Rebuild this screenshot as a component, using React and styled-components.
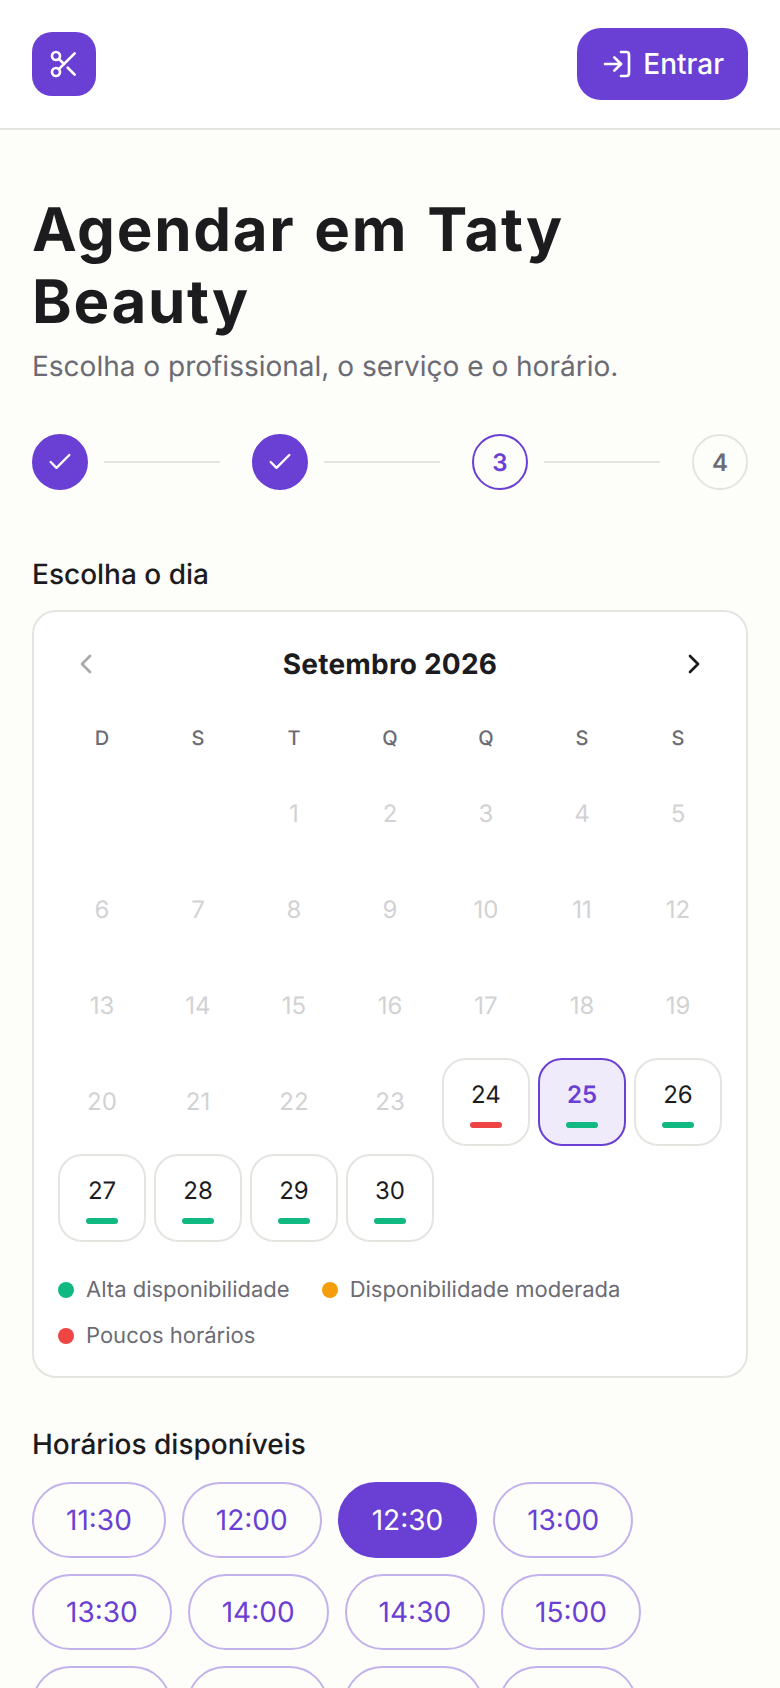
import React from 'react';
import styled, { createGlobalStyle } from 'styled-components';
import { Scissors, LogIn, Check, ChevronLeft, ChevronRight } from 'lucide-react';

const purple = '#6a3fd4';
const ink = '#1c1c1f';
const muted = '#6b6b73';
const line = '#e4e4e0';

const GlobalStyle = createGlobalStyle`
  html, body {
    margin: 0;
    padding: 0;
    background: #fdfdfa;
  }
  * {
    box-sizing: border-box;
  }
`;

const Page = styled.div`
  height: 100vh;
  overflow: hidden;
  font-family: Inter, "Liberation Sans", sans-serif;
  text-rendering: geometricPrecision;
  color: ${ink};
  background: #fdfdfa;
`;

const Header = styled.header`
  display: flex;
  justify-content: space-between;
  align-items: center;
  height: 130px;
  padding: 0 32px;
  background: #fff;
  border-bottom: 2px solid ${line};
`;

const Logo = styled.div`
  display: flex;
  justify-content: center;
  align-items: center;
  width: 64px;
  height: 64px;
  border-radius: 20px;
  background: ${purple};
  color: #fff;
`;

const LoginButton = styled.button`
  display: flex;
  align-items: center;
  gap: 10px;
  height: 72px;
  padding: 0 24px;
  border: 0;
  border-radius: 24px;
  background: ${purple};
  color: #fff;
  font-family: inherit;
  font-size: 28px;
  font-weight: 500;
`;

const Main = styled.main`
  padding: 64px 32px 0;
`;

const Title = styled.h1`
  margin: 0;
  font-size: 60px;
  font-weight: 700;
  line-height: 72px;
  letter-spacing: 1.7px;
  word-spacing: 3px;
`;

const Subtitle = styled.p`
  margin: 8px 0 0;
  font-size: 28px;
  line-height: 40px;
  color: ${muted};
`;

const Steps = styled.div`
  display: flex;
  align-items: center;
  margin-top: 48px;
`;

const StepDot = styled.div`
  display: flex;
  flex: none;
  justify-content: center;
  align-items: center;
  width: 56px;
  height: 56px;
  border-radius: 50%;
  border: 2px solid ${(p) => (p.$state === 'todo' ? line : purple)};
  background: ${(p) => (p.$state === 'done' ? purple : 'transparent')};
  color: ${(p) => (p.$state === 'todo' ? muted : p.$state === 'done' ? '#fff' : purple)};
  font-size: 24px;
  font-weight: 600;
`;

const StepLine = styled.div`
  flex: 1;
  height: 2px;
  margin: 0 32px 0 16px;
  background: ${line};
`;

const SectionLabel = styled.h2`
  margin: 0 0 16px;
  font-size: 28px;
  font-weight: 500;
  line-height: 40px;
`;

const DaySection = styled.section`
  margin-top: 64px;
`;

const Card = styled.div`
  padding: 24px;
  border: 2px solid ${line};
  border-radius: 24px;
  background: #fff;
`;

const MonthBar = styled.div`
  display: flex;
  justify-content: space-between;
  align-items: center;
  height: 56px;
  padding: 0 12px;
`;

const MonthName = styled.div`
  font-size: 28px;
  font-weight: 700;
  letter-spacing: 0.2px;
`;

const NavArrow = styled.span`
  display: flex;
  color: ${(p) => (p.$off ? '#a9a9ad' : ink)};
`;

const Grid = styled.div`
  display: grid;
  grid-template-columns: repeat(7, 88px);
  gap: 8px;
`;

const WeekRow = styled(Grid)`
  margin-top: 22px;
  margin-bottom: 8px;
`;

const WeekDay = styled.div`
  height: 48px;
  line-height: 48px;
  text-align: center;
  font-size: 20px;
  font-weight: 500;
  color: ${muted};
`;

const MutedDay = styled.div`
  height: 88px;
  line-height: 88px;
  text-align: center;
  font-size: 24px;
  color: #d2d2d4;
`;

const Day = styled.div`
  display: flex;
  flex-direction: column;
  align-items: center;
  height: 88px;
  padding-top: 19px;
  border: 2px solid ${(p) => (p.$selected ? purple : line)};
  border-radius: 24px;
  background: ${(p) => (p.$selected ? '#f0ebfb' : '#fff')};
  color: ${(p) => (p.$selected ? purple : ink)};
  font-size: 24px;
  font-weight: ${(p) => (p.$selected ? 600 : 400)};
  line-height: 32px;
`;

const DayMark = styled.div`
  width: 32px;
  height: 6px;
  margin-top: 11px;
  border-radius: 3px;
  background: ${(p) => p.$color};
`;

const Legend = styled.div`
  display: flex;
  flex-wrap: wrap;
  gap: 14px 32px;
  margin-top: 32px;
`;

const LegendItem = styled.div`
  display: flex;
  align-items: center;
  gap: 12px;
  font-size: 22px;
  line-height: 32px;
  color: ${muted};
`;

const Dot = styled.span`
  width: 16px;
  height: 16px;
  border-radius: 50%;
  background: ${(p) => p.$color};
`;

const TimeSection = styled.section`
  margin-top: 46px;
`;

const Times = styled.div`
  display: flex;
  flex-wrap: wrap;
  gap: 16px;
  margin-top: 18px;
`;

const TimePill = styled.button`
  height: 76px;
  padding: 0 32px;
  border: 2px solid ${(p) => (p.$selected ? purple : '#c3b2ec')};
  border-radius: 38px;
  background: ${(p) => (p.$selected ? purple : 'transparent')};
  color: ${(p) => (p.$selected ? '#fff' : purple)};
  font-family: inherit;
  font-size: 28px;
  font-weight: 400;
  text-rendering: inherit;
`;

const TimeLabel = styled(SectionLabel)`
  margin-bottom: 0;
`;

const green = '#10b981';
const amber = '#f59e0b';
const red = '#ef4444';

const openDays = { 24: red, 25: green, 26: green, 27: green, 28: green, 29: green, 30: green };
const weekDays = ['D', 'S', 'T', 'Q', 'Q', 'S', 'S'];
const days = Array.from({ length: 30 }, (_, i) => i + 1);
const times = ['11:30', '12:00', '12:30', '13:00', '13:30', '14:00', '14:30', '15:00', '15:30', '16:00', '16:30', '17:00'];

const App = () => {
  return (
    <Page>
      <GlobalStyle />
      <Header>
        <Logo>
          <Scissors size={32} strokeWidth={2} />
        </Logo>
        <LoginButton>
          <LogIn size={32} strokeWidth={2} />
          Entrar
        </LoginButton>
      </Header>
      <Main>
        <Title>Agendar em Taty Beauty</Title>
        <Subtitle>Escolha o profissional, o serviço e o horário.</Subtitle>
        <Steps>
          <StepDot $state="done"><Check size={28} strokeWidth={2} /></StepDot>
          <StepLine />
          <StepDot $state="done"><Check size={28} strokeWidth={2} /></StepDot>
          <StepLine />
          <StepDot $state="current">3</StepDot>
          <StepLine />
          <StepDot $state="todo">4</StepDot>
        </Steps>
        <DaySection>
          <SectionLabel>Escolha o dia</SectionLabel>
          <Card>
            <MonthBar>
              <NavArrow $off><ChevronLeft size={32} /></NavArrow>
              <MonthName>Setembro 2026</MonthName>
              <NavArrow><ChevronRight size={32} /></NavArrow>
            </MonthBar>
            <WeekRow>
              {weekDays.map((d, i) => (
                <WeekDay key={i}>{d}</WeekDay>
              ))}
            </WeekRow>
            <Grid>
              <MutedDay />
              <MutedDay />
              {days.map((d) =>
                openDays[d] ? (
                  <Day key={d} $selected={d === 25}>
                    {d}
                    <DayMark $color={openDays[d]} />
                  </Day>
                ) : (
                  <MutedDay key={d}>{d}</MutedDay>
                )
              )}
            </Grid>
            <Legend>
              <LegendItem><Dot $color={green} />Alta disponibilidade</LegendItem>
              <LegendItem><Dot $color={amber} />Disponibilidade moderada</LegendItem>
              <LegendItem><Dot $color={red} />Poucos horários</LegendItem>
            </Legend>
          </Card>
        </DaySection>
        <TimeSection>
          <TimeLabel>Horários disponíveis</TimeLabel>
          <Times>
            {times.map((t) => (
              <TimePill key={t} $selected={t === '12:30'}>{t}</TimePill>
            ))}
          </Times>
        </TimeSection>
      </Main>
    </Page>
  );
};

export default App;
